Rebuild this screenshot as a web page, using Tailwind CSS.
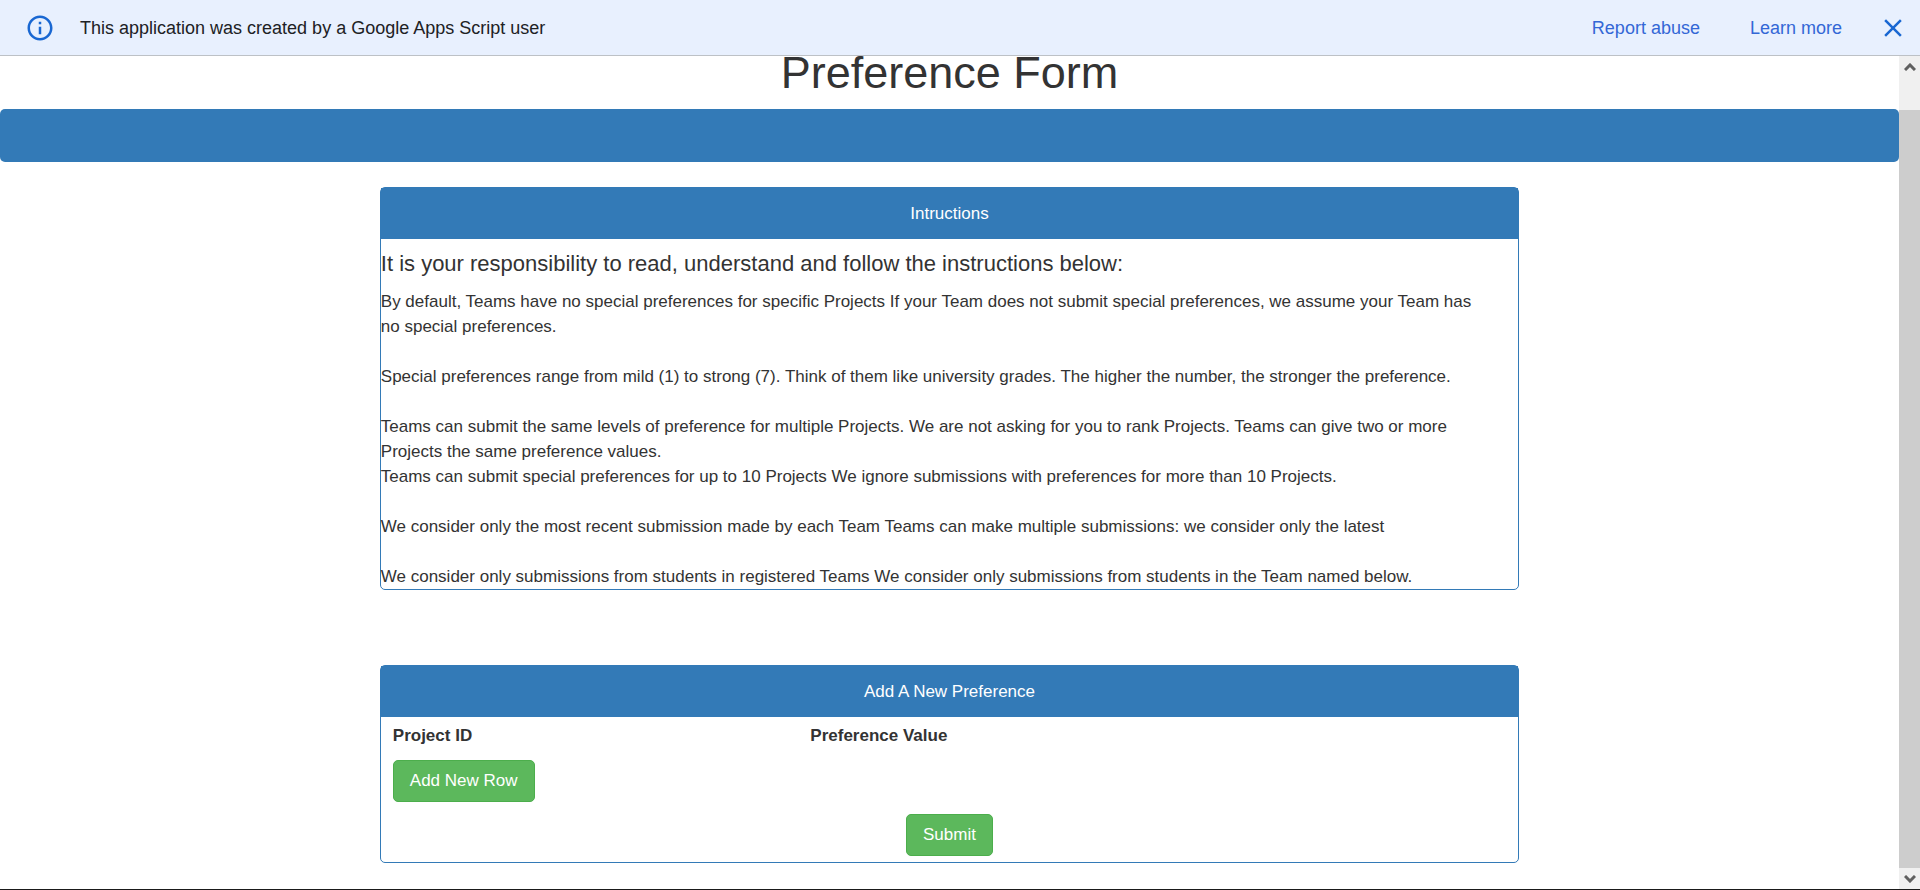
<!DOCTYPE html>
<html lang="en">
<head>
<meta charset="utf-8">
<title>Preference Form</title>
<script src="https://cdn.jsdelivr.net/npm/@tailwindcss/browser@4"></script>
</head>
<body class="flex h-screen flex-col overflow-hidden bg-white font-['Liberation_Sans',Arial,sans-serif] text-[17px] leading-[25px] text-[#333333]">
  <header class="flex h-14 shrink-0 items-center border-b border-[#bdc1c6] bg-[#e8f0fe] pl-[25px] pr-3 text-[18px] leading-[26px] text-[#202124]">
    <svg class="size-[30px] shrink-0" viewBox="0 0 24 24" fill="#1967d2" aria-hidden="true"><path d="M11 7h2v2h-2zm0 4h2v6h-2zm1-9C6.48 2 2 6.48 2 12s4.48 10 10 10 10-4.480 10-10S17.520 2 12 2zm0 18c-4.410 0-8-3.590-8-8s3.590-8 8-8 8 3.590 8 8-3.590 8-8 8z"/></svg>
    <p class="ml-[25px] flex-1">This application was created by a Google Apps Script user</p>
    <nav class="flex items-center text-[#3367d6]">
      <a href="#" class="mr-[50px]">Report abuse</a>
      <a href="#" class="mr-9">Learn more</a>
    </nav>
    <button type="button" aria-label="Close" class="flex size-[30px] items-center justify-center">
      <svg class="size-[30px]" viewBox="0 0 24 24" fill="#1967d2"><path d="M19 6.410L17.590 5 12 10.590 6.410 5 5 6.410 10.590 12 5 17.590 6.410 19 12 13.410 17.590 19 19 17.590 13.410 12z"/></svg>
    </button>
  </header>

  <div class="flex min-h-0 flex-1 border-b border-[#1a1a1a]">
    <main class="min-w-0 flex-1 overflow-hidden">
      <h1 class="-mt-2 mb-3 text-center text-[45px] leading-[49px]">Preference Form</h1>
      <div class="h-[53px] rounded-[5px] bg-[#337ab7]"></div>

      <section class="mx-auto mt-[25px] w-3/5 rounded-[5px] border border-[#337ab7]">
        <h2 class="bg-[#337ab7] py-[13px] text-center text-white">Intructions</h2>
        <h3 class="mt-3 mb-[13px] text-[22px]">It is your responsibility to read, understand and follow the instructions below:</h3>
        <p>By default, Teams have no special preferences for specific Projects If your Team does not submit special preferences, we assume your Team has<br>no special preferences.</p>
        <p class="mt-[25px]">Special preferences range from mild (1) to strong (7). Think of them like university grades. The higher the number, the stronger the preference.</p>
        <p class="mt-[25px]">Teams can submit the same levels of preference for multiple Projects. We are not asking for you to rank Projects. Teams can give two or more<br>Projects the same preference values.</p>
        <p>Teams can submit special preferences for up to 10 Projects We ignore submissions with preferences for more than 10 Projects.</p>
        <p class="mt-[25px]">We consider only the most recent submission made by each Team Teams can make multiple submissions: we consider only the latest</p>
        <p class="mt-[25px]">We consider only submissions from students in registered Teams We consider only submissions from students in the Team named below.</p>
      </section>

      <form class="mx-auto mt-[75px] w-3/5 rounded-[5px] border border-[#337ab7]">
        <h2 class="bg-[#337ab7] py-[13px] text-center text-white">Add A New Preference</h2>
        <div class="px-3">
          <table class="w-full table-fixed text-left font-bold">
            <thead>
              <tr>
                <th scope="col" class="w-[37.5%] py-1.5">Project ID</th>
                <th scope="col" class="py-1.5">Preference Value</th>
              </tr>
            </thead>
          </table>
          <button type="button" class="mt-1.5 block rounded-[5px] border border-[#4cae4c] bg-[#5cb85c] px-4 py-2 leading-6 text-white">Add New Row</button>
          <button type="submit" class="mx-auto mb-1.5 mt-3 block rounded-[5px] border border-[#4cae4c] bg-[#5cb85c] px-4 py-2 leading-6 text-white">Submit</button>
        </div>
      </form>
    </main>

    <div class="flex w-[21px] shrink-0 flex-col bg-[#f0f0f0]">
      <button type="button" aria-label="Scroll up" class="flex h-[21px] items-center justify-center">
        <svg class="h-2 w-3" viewBox="0 0 12 8" fill="none" stroke="#606060" stroke-width="3"><path d="M1 7l5-5 5 5"/></svg>
      </button>
      <div class="mt-[33px] flex-1 bg-[#cdcdcd]"></div>
      <button type="button" aria-label="Scroll down" class="flex h-[21px] items-center justify-center">
        <svg class="h-2 w-3" viewBox="0 0 12 8" fill="none" stroke="#606060" stroke-width="3"><path d="M1 1l5 5 5-5"/></svg>
      </button>
    </div>
  </div>
</body>
</html>
